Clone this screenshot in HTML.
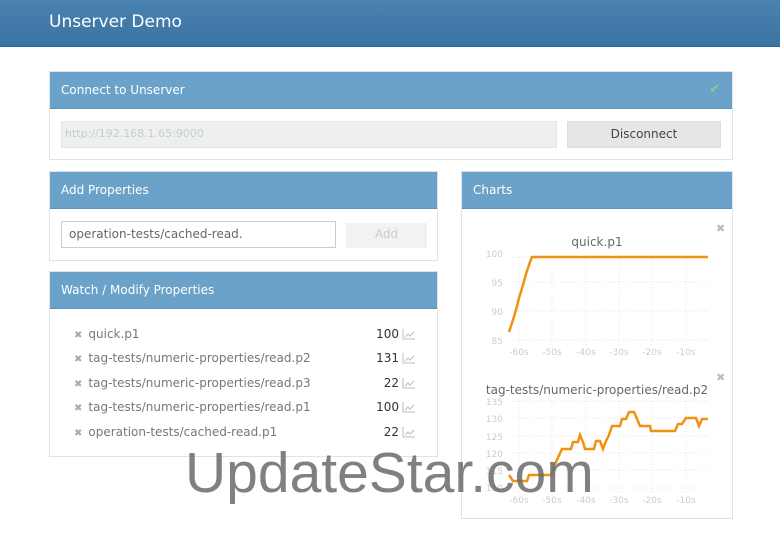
<!DOCTYPE html>
<html><head><meta charset="utf-8"><style>
*{margin:0;padding:0;box-sizing:border-box}
body{width:780px;height:533px;background:#fff;font-family:"DejaVu Sans","Liberation Sans",sans-serif;position:relative;overflow:hidden;color:#555}
.a{position:absolute}
.hdr{left:0;top:0;width:780px;height:47px;background:linear-gradient(#4a82b0,#3a74a3);border-bottom:1px solid #2f6591}
.hdr span{position:absolute;left:49px;top:12px;color:#fff;font-size:17px}
.p{position:absolute;border:1px solid #dde3e8;background:#fff}
.ph{height:37px;background:#6aa2c9;color:#fff;font-size:12px;padding:11px 11px;border-bottom:1px solid #5c93ba}
.row{position:absolute;left:24px;font-size:12px;color:#777;width:342px}
.row .x{color:#aaa;font-size:10px;margin-right:6px}
.row .v{position:absolute;right:17px;color:#333}
.row .i{position:absolute;right:0;top:1px}
</style></head><body>
<div class="a hdr"><span>Unserver Demo</span></div>

<div class="p" style="left:49px;top:71px;width:684px;height:89px">
<div class="ph">Connect to Unserver<span style="position:absolute;right:12px;top:10px;color:#7fd27f;font-size:13px">✔</span></div>
<div class="a" style="left:11px;top:49px;width:496px;height:27px;background:#eef0f0;border:1px solid #e2e5e5;color:#c8cccc;font-size:11px;padding:5px 3px">http://192.168.1.65:9000</div>
<div class="a" style="left:517px;top:49px;width:154px;height:27px;background:#e6e6e6;border:1px solid #ddd;color:#444;font-size:12px;text-align:center;padding-top:5px">Disconnect</div>
</div>

<div class="p" style="left:49px;top:171px;width:389px;height:90px">
<div class="ph">Add Properties</div>
<div class="a" style="left:11px;top:49px;width:275px;height:27px;border:1px solid #ccc;color:#666;font-size:12px;padding:5px 7px">operation-tests/cached-read.</div>
<div class="a" style="left:296px;top:51px;width:81px;height:25px;background:#f2f2f2;color:#ccc;font-size:12px;text-align:center;padding-top:4px">Add</div>
</div>

<div class="p" style="left:49px;top:271px;width:389px;height:186px">
<div class="ph">Watch / Modify Properties</div>
<div class="row" style="top:55px"><span class="x">✖</span>quick.p1<span class="v">100</span><svg class="i" width="14" height="12"><path d="M1 1V11H13M3 9L6 6 8 8 12 4" stroke="#bbb" fill="none"/></svg></div>
<div class="row" style="top:79px"><span class="x">✖</span>tag-tests/numeric-properties/read.p2<span class="v">131</span><svg class="i" width="14" height="12"><path d="M1 1V11H13M3 9L6 6 8 8 12 4" stroke="#bbb" fill="none"/></svg></div>
<div class="row" style="top:104px"><span class="x">✖</span>tag-tests/numeric-properties/read.p3<span class="v">22</span><svg class="i" width="14" height="12"><path d="M1 1V11H13M3 9L6 6 8 8 12 4" stroke="#bbb" fill="none"/></svg></div>
<div class="row" style="top:128px"><span class="x">✖</span>tag-tests/numeric-properties/read.p1<span class="v">100</span><svg class="i" width="14" height="12"><path d="M1 1V11H13M3 9L6 6 8 8 12 4" stroke="#bbb" fill="none"/></svg></div>
<div class="row" style="top:153px"><span class="x">✖</span>operation-tests/cached-read.p1<span class="v">22</span><svg class="i" width="14" height="12"><path d="M1 1V11H13M3 9L6 6 8 8 12 4" stroke="#bbb" fill="none"/></svg></div>
</div>

<div class="p" style="left:461px;top:171px;width:272px;height:348px">
<div class="ph">Charts</div>
</div>

<svg class="a" style="left:0;top:0" width="780" height="533" font-family="DejaVu Sans, sans-serif">
<g stroke="#e4e4e4" stroke-dasharray="1,2">
<path d="M509 257H708M509 282H708M509 311H708M509 340H708M519 257V345M552 257V345M586 257V345M619 257V345M652 257V345M686 257V345"/>
<path d="M509 401H708M509 418H708M509 436H708M509 453H708M509 470H708M509 488H708M519 401V492M552 401V492M586 401V492M619 401V492M652 401V492M686 401V492"/>
</g>
<text x="716" y="232" fill="#bbb" font-size="11">✖</text>
<text x="716" y="381" fill="#bbb" font-size="11">✖</text>
<text x="597" y="246" fill="#666" font-size="12" text-anchor="middle">quick.p1</text>
<text x="597" y="394" fill="#666" font-size="12" text-anchor="middle">tag-tests/numeric-properties/read.p2</text>
<g fill="#ccc" font-size="9" text-anchor="end">
<text x="503" y="257">100</text><text x="503" y="286">95</text><text x="503" y="315">90</text><text x="503" y="344">85</text>
<text x="503" y="405">135</text><text x="503" y="422">130</text><text x="503" y="440">125</text><text x="503" y="457">120</text><text x="503" y="474">115</text><text x="503" y="491">110</text>
</g>
<g fill="#ccc" font-size="9" text-anchor="middle">
<text x="519" y="355">-60s</text><text x="552" y="355">-50s</text><text x="586" y="355">-40s</text><text x="619" y="355">-30s</text><text x="652" y="355">-20s</text><text x="686" y="355">-10s</text>
<text x="519" y="503">-60s</text><text x="552" y="503">-50s</text><text x="586" y="503">-40s</text><text x="619" y="503">-30s</text><text x="652" y="503">-20s</text><text x="686" y="503">-10s</text>
</g>
<polyline fill="none" stroke="#f29111" stroke-width="2.5" points="509,332 513,320 516,310 519,298 523,285 526,274 530,262 532,257 708,257"/>
<polyline fill="none" stroke="#f29111" stroke-width="2.5" points="509,475 513,481 527,481 529,475 551,475 556,462 562,449 571,449 573,442 578,442 580,435 583,442 585,449 594,449 596,441 600,441 603,449 606,441 609,435 612,426 620,426 622,419 626,419 629,412 634,412 637,419 640,426 650,426 651,431 675,431 678,424 682,424 686,418 696,418 699,426 702,419 708,419"/>
<text x="185" y="492" fill="#6a6a6a" fill-opacity="0.85" font-size="57" font-family="Liberation Sans, sans-serif">UpdateStar.com</text>
</svg>
</body></html>
